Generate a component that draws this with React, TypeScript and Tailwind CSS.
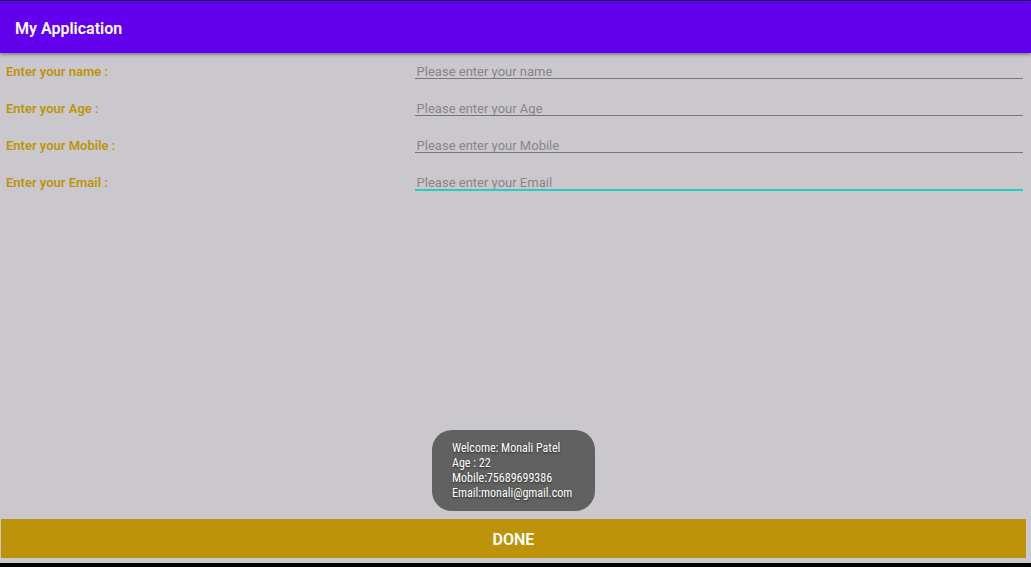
import { useState } from 'react';

const fields = [
  { id: 'name', label: 'Enter your name :', hint: 'Please enter your name', type: 'text' },
  { id: 'age', label: 'Enter your Age :', hint: 'Please enter your Age', type: 'text' },
  { id: 'mobile', label: 'Enter your Mobile :', hint: 'Please enter your Mobile', type: 'tel' },
  { id: 'email', label: 'Enter your Email :', hint: 'Please enter your Email', type: 'email' },
];

const toastLines = ['Welcome: Monali Patel', 'Age : 22', 'Mobile:75689699386', 'Email:monali@gmail.com'];

export default function App() {
  const [active, setActive] = useState('email');

  return (
    <div className="relative flex min-h-screen flex-col border-t border-b-4 border-t-[#14004a] border-b-black bg-[#cbc8cd] font-['Roboto',sans-serif]">
      <header className="flex h-13 items-center bg-[#6200ee] px-[15px] pt-1 shadow-[0_1px_4px_rgba(0,0,0,0.5)]">
        <h1 className="text-base font-semibold text-white">My Application</h1>
      </header>

      <form className="flex flex-1 flex-col" onSubmit={(e) => e.preventDefault()}>
        <div className="flex flex-col gap-3 pt-2">
          {fields.map((f) => (
            <div key={f.id} className="grid h-[25px] grid-cols-[2fr_3fr] items-start gap-x-1 pr-2 pl-[5px]">
              <label htmlFor={f.id} className="pt-px pl-px text-[13px] leading-5 font-semibold text-[#bd9409]">
                {f.label}
              </label>
              <input
                id={f.id}
                type={f.type}
                placeholder={f.hint}
                onFocus={() => setActive(f.id)}
                className={
                  active === f.id
                    ? 'h-[19px] w-full border-b-2 border-[#20cfc0] bg-transparent px-0.5 pt-1 text-[13px] leading-4 outline-none placeholder:text-[#88858a]'
                    : 'h-[18px] w-full border-b border-[#7a767d] bg-transparent px-0.5 pt-1 text-[13px] leading-4 outline-none placeholder:text-[#88858a]'
                }
              />
            </div>
          ))}
        </div>

        <button type="submit" className="mt-auto mr-[5px] mb-[5px] ml-px h-[39px] bg-[#bd9409] pt-0.5 text-base font-semibold text-white">
          DONE
        </button>
      </form>

      <div className="pointer-events-none absolute inset-x-0 bottom-[52px] flex justify-center pr-1">
        <div
          role="status"
          className="min-w-[163px] rounded-[20px] bg-[#616161] px-5 pt-[11px] pb-2.5 font-['Roboto_Condensed','Roboto',sans-serif] text-xs leading-[15px] whitespace-nowrap text-white [text-shadow:0_1px_2px_rgba(0,0,0,0.6)]"
        >
          {toastLines.map((line) => (
            <p key={line}>{line}</p>
          ))}
        </div>
      </div>
    </div>
  );
}
